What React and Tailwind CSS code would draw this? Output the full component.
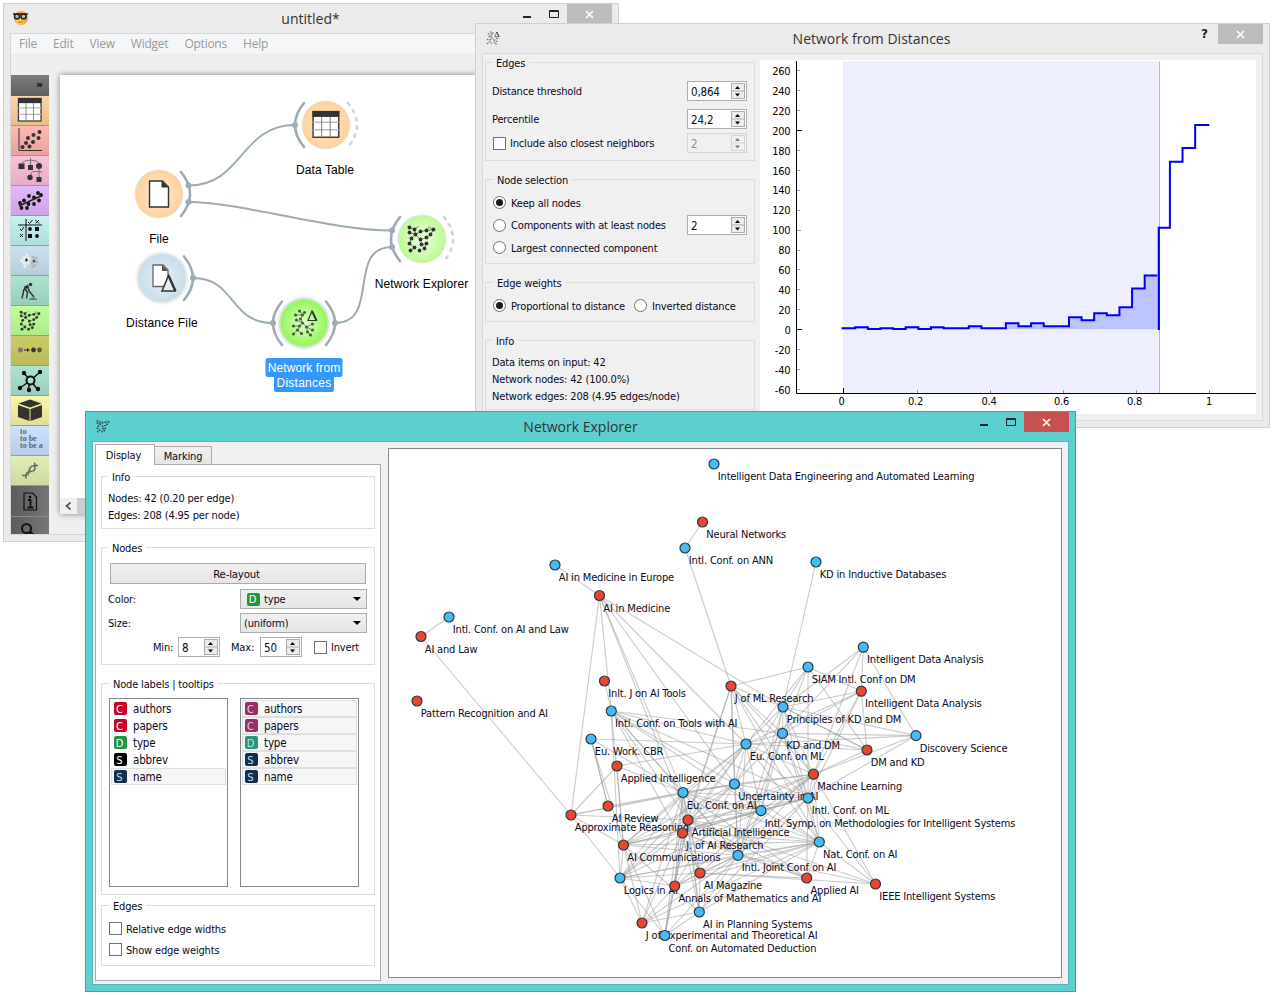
const UI = 'font-["DejaVu_Sans_Condensed","DejaVu_Sans",sans-serif] text-[11px] tracking-[-0.17px] leading-[13px] text-[#0a0a1c]';
const TITLE = 'font-["Open_Sans","Noto_Sans",sans-serif] text-[14px] leading-[18px] text-[#333333]';

/* ---------- small controls ---------- */

function Group({ title, className = '', children }) {
  return (
    <fieldset className={`min-w-0 border border-[#dcdcdc] ${className}`}>
      <legend className="h-[13px] px-[4px] leading-[15px] whitespace-nowrap">{title}</legend>
      {children}
    </fieldset>
  );
}

function Spin({ value, className = '', disabled }) {
  return (
    <div className={`flex h-5 shrink-0 items-center border pr-px pl-[3px] text-[11.5px] ${disabled ? 'border-[#d5d5d5] bg-[#f0f0f0] text-[#8b8b8b]' : 'border-[#abadb3] bg-white'} ${className}`}>
      <span className="flex-1 pt-[2px]">{value}</span>
      <svg className="h-4 w-[14px]" viewBox="0 0 14 16">
        <rect x=".5" y=".5" width="13" height="15" fill={disabled ? '#f0f0f0' : '#ececec'} stroke={disabled ? '#d5d5d5' : '#acacac'} />
        <path d="M0 8h14" stroke={disabled ? '#d5d5d5' : '#acacac'} />
        <path d="M4 6h5L6.500 3zM4 10.500h5L6.500 13.500z" fill={disabled ? '#777' : '#000'} />
      </svg>
    </div>
  );
}

const Check = () => <span className="h-[13px] w-[13px] shrink-0 border border-[#707070] bg-white" />;

function Radio({ on }) {
  return (
    <span className="flex h-[13px] w-[13px] shrink-0 items-center justify-center rounded-full border border-[#707070] bg-white">
      {on && <span className="h-[7px] w-[7px] rounded-full bg-[#1c1c1c]" />}
    </span>
  );
}

function Combo({ children }) {
  return (
    <div className="flex h-5 w-[127px] items-center border border-[#acacac] bg-linear-to-b from-[#f0f0f0] to-[#e6e6e6] pr-[5px] pl-[3px]">
      <span className="flex flex-1 items-center gap-[4px]">{children}</span>
      <svg className="h-4 w-[8px]" viewBox="0 0 8 4"><path d="M0 0h8L4 4z" /></svg>
    </div>
  );
}

function Tag({ letter, color }) {
  return <span className={`flex h-[13px] w-[13px] shrink-0 items-center justify-center rounded-[2px] pr-[2px] pt-px font-["DejaVu_Sans"] text-[10px] tracking-normal ${color}`}>{letter}</span>;
}

function Close({ className }) {
  return (
    <div className={`flex w-[45px] items-center justify-center ${className}`}>
      <svg className="h-[9px] w-[9px]" viewBox="0 0 9 9"><path d="M1 1l7 7M8 1l-7 7" stroke="#fff" strokeWidth="1.7" /></svg>
    </div>
  );
}

function MinMax({ className = '' }) {
  return (
    <svg className={`h-[10px] w-[38px] ${className}`} viewBox="0 0 38 10">
      <path d="M0 8h8" stroke="#222" strokeWidth="2" />
      <path d="M26.500 1.500h9v7h-9zM26 2.500h10" fill="none" stroke="#222" />
    </svg>
  );
}

/* ---------- glyph drawings ---------- */

const NET_DOTS = [[3, 3], [8, 5], [3, 8], [9, 10], [14, 7], [20, 6], [27, 5], [24, 10], [20, 13], [14, 15], [5, 14], [3, 19], [8, 23], [15, 20], [20, 19], [18, 24], [4, 26], [13, 26]];
function NetGlyph({ color = '#333' }) {
  return (
    <g>
      <path d="M1 2l7 3 1 5-6-2M9 10l5-3 6-1 7-1-3 5-4 3-6 2-5-5-4 4-2 5 5 4-4 3M14 15l1 5 5-1-2 5M8 5l4-3M20 6l3-4M23 3l4 2" fill="none" stroke={color} strokeWidth=".6" />
      {NET_DOTS.map(([x, y]) => <circle key={`${x}-${y}`} cx={x} cy={y} r="1.900" fill={color} />)}
    </g>
  );
}

const DIST_DOTS = [[9, 2], [5, 6], [12, 6], [14, 3.5], [6, 11], [10, 10], [12, 14], [3, 17], [9, 17], [16, 18], [22, 15], [22, 21], [7, 21], [17, 23], [3, 25], [11, 24.5], [20, 26]];
function DistGlyph({ color = '#4c5c46' }) {
  return (
    <g>
      <path d="M9 2l3 4-2 4 2 4 4 4 6-3M5 6l7 0M12 14l-3 3H3M9 17l-2 4-4 4M7 21l4 3.500M16 18l1 5 3 3M16 18l6 3M6 11l6 3" fill="none" stroke={color} strokeWidth=".7" />
      {DIST_DOTS.map(([x, y]) => <circle key={`${x}-${y}`} cx={x} cy={y} r="1.600" fill={color} />)}
      <path d="M17.500 11.500h8.500L21.500 2z" fill="none" stroke="#333" strokeWidth="1.200" />
      <path d="M21.500 2l4.500 9.500" stroke="#333" strokeWidth="1.800" />
    </g>
  );
}

function TableGlyph() {
  return (
    <g>
      <rect x="1" y="1" width="24" height="24" fill="#fff" stroke="#333" strokeWidth="1.300" />
      <path d="M1 11h24M1 18h24" stroke="#bbb" strokeWidth="1.300" />
      <path d="M9 6v19M17 6v19" stroke="#777" strokeWidth=".9" />
      <path d="M.5 .5h25v5.500h-25z" fill="#333" />
    </g>
  );
}

const dots = (pts, r = 2) => pts.map(([x, y]) => <circle key={`${x}-${y}`} cx={x} cy={y} r={r} />);

const TOOLS = [
  ['from-[#ffd5a0] to-[#eabf8b]', <g transform="translate(6.5 1.5) scale(.94)"><TableGlyph /></g>],
  ['from-[#ffb8b2] to-[#e9a29d]', <g fill="#333"><path d="M8 2v22.500H31" fill="none" stroke="#333" />{dots([[11.5, 21], [15, 17], [18.5, 20.5], [17, 12], [22, 16], [22.5, 9], [27.5, 12], [28.5, 6]])}</g>],
  ['from-[#fac1da] to-[#e5aec6]', <g fill="#333"><path d="M19.500 2v7M11 8c0-5 17-5 17 0v14M20 20c0-5 1-5 11-4" fill="none" stroke="#777" /><path d="M7.500 7.500h6v5.500h-6zM17 9h5v5h-5zM25.500 21h5v5h-5z" />{dots([[28, 10]], 3)}{dots([[19, 21.5]], 2.7)}</g>],
  ['from-[#e2b9fb] to-[#cda5e6]', <g fill="#111">{dots([[9, 17], [10.5, 22], [13, 14.5], [16, 22], [17.5, 18], [18, 10], [23, 18], [23, 11.5], [27, 7], [28, 14.5], [30, 9]], 1.9)}<path d="M8 20L31 9.500" stroke="#222" strokeWidth="1.500" /></g>],
  ['from-[#c3f4f2] to-[#aedfdd]', <g fill="#111"><path d="M15 3v22M7 9h24" stroke="#111" /><path d="M17 6l1.500 1.500L21.500 4M9 13l1.500 1.500L13 11M24.500 4l3.500 3.500M28 4l-3.500 3.500M9 18l3 3M12 18l-3 3" fill="none" stroke="#111" /><path d="M24 11h4v4h-4zM17 18h4v4h-4z" />{dots([[19, 13], [26, 20]], 1.9)}</g>],
  ['from-[#cae1ee] to-[#b7cddb]', <g fill="#eee">{dots([[13, 12], [16, 10], [18, 13], [17, 17], [13, 17], [14, 20], [11, 15]], 1.7)}<g fill="#b4b4b4">{dots([[22, 11], [25, 12], [26, 16], [24, 19], [21, 17], [22, 20]], 1.5)}</g><path d="M15.500 12.500v3M14 14h3M23 13.500v3M21.500 15h3" stroke="#222" /></g>],
  ['from-[#ade3cf] to-[#98cfbb]', <g fill="none" stroke="#333"><circle cx="19.500" cy="8.500" r="1.800" fill="#333" stroke="none" /><path d="M17.500 10l-4 2" strokeWidth="3" /><path d="M13.500 12l3 4.500-1 6M13 13l-1 5-1 4.500M17 11l1 4 5 6" strokeWidth="1.500" /><path d="M18 23.500c2-1 3-3 8 0z" fill="#777" stroke="#777" /></g>],
  ['from-[#c0ff97] to-[#afea89]', <g transform="translate(8 4) scale(.74)"><NetGlyph /></g>],
  ['from-[#cccc66] to-[#baba59]', <g fill="#333"><circle cx="9.500" cy="14" r="2.500" fill="#777" /><path d="M13 14h5" stroke="#222" /><path d="M16 12l3 2-3 2z" />{dots([[22.5, 14]], 2.4)}<circle cx="28.500" cy="14" r="2.400" fill="#555" /></g>],
  ['from-[#ade3cf] to-[#98cfbb]', <g fill="#111"><path d="M19.500 14.500L12 6M19.500 14.500L29 6M19.500 14.500L9 22M19.500 14.500L17 24M19.500 14.500L27 24" stroke="#111" strokeWidth="1.500" /><circle cx="19.500" cy="14.500" r="4" fill="#ade3cf" stroke="#111" strokeWidth="2" />{dots([[13, 7], [29, 6], [9, 22], [18, 24], [27, 23]], 2.2)}</g>],
  ['from-[#f9f6a7] to-[#e2df94]', <g fill="#333"><path d="M7.500 7.500L19 3.500 30.500 7.500 19 11.500z" /><path d="M7 9l11.500 4V25L7 21zM31 9l-11.500 4V25l11.500-4z" /></g>],
  ['from-[#cce2ff] to-[#b7cce8]', null],
  ['from-[#e0efb3] to-[#ccda9f]', <g fill="none" stroke="#666"><path d="M11 19.500c5 .5 7-1 7-4.500 0-4 3-6 9-5.500" strokeWidth="1.500" /><path d="M15 22.500c-1-5 1-7 5-7s5-3 3.500-9" strokeWidth="1.500" /><path d="M16 18l2 2M18.500 12.500l4 4M21 9.500l3 3" stroke="#999" /></g>],
];

/* ---------- workflow window ---------- */

function Sidebar() {
  return (
    <div className="flex h-[459px] w-[38px] flex-col overflow-hidden">
      <div className="flex h-[21px] shrink-0 items-center justify-end bg-linear-to-b from-[#7d7d7d] to-[#5f5f5f] pr-[6px] font-['DejaVu_Sans'] text-[11px] font-bold text-black">»</div>
      {TOOLS.map(([tone, glyph], i) => (
        <div key={i} className={`h-[30px] shrink-0 border-b border-[#999] bg-linear-to-b ${tone}`}>
          {glyph ? (
            <svg className="h-[29px] w-[38px]" viewBox="0 0 38 29">{glyph}</svg>
          ) : (
            <div className="pt-[3px] pl-[9px] font-['Liberation_Serif'] text-[8px] leading-[6.8px] font-bold text-[#666]">
              <div>to</div><div>to be</div><div>to be a</div>
            </div>
          )}
        </div>
      ))}
      <div className="h-[31px] shrink-0 border-b border-[#8a8a8a] bg-linear-to-r from-[#5c5c5c] to-[#777]">
        <svg className="h-[30px] w-[38px]" viewBox="0 0 38 30">
          <path d="M13 7h8.500l4 4v13H13z" fill="none" stroke="#111" strokeWidth="1.200" />
          <path d="M17 14h2.500v7M16.500 21.500h6" fill="none" stroke="#111" strokeWidth="1.800" /><circle cx="19" cy="11" r="1.300" />
        </svg>
      </div>
      <div className="h-[18px] shrink-0 bg-linear-to-r from-[#5c5c5c] to-[#777]">
        <svg className="h-[18px] w-[38px]" viewBox="0 0 38 18"><circle cx="15.500" cy="11.500" r="4.500" fill="none" stroke="#111" strokeWidth="2" /><path d="M19 15l4 4" stroke="#111" strokeWidth="3" /></svg>
      </div>
    </div>
  );
}

function Workflow() {
  const arc = { fill: 'none', stroke: '#9cacb4', strokeWidth: 2.6, strokeLinecap: 'round' };
  const dash = { fill: 'none', stroke: '#ccd6d9', strokeWidth: 2.6, strokeLinecap: 'round', strokeDasharray: '2.5 6' };
  const name = { textAnchor: 'middle', fontSize: 12, fontFamily: '"Liberation Sans", Arial, sans-serif', letterSpacing: '0.1' };
  return (
    <svg className="block h-[423px] w-[416px]" viewBox="60 75 416 423">
      <defs>
        <radialGradient id="orange"><stop offset="0" stopColor="#ffe9d2" /><stop offset="1" stopColor="#ffd19b" /></radialGradient>
        <radialGradient id="blue"><stop offset="0" stopColor="#e6eef4" /><stop offset="1" stopColor="#c8deeb" /></radialGradient>
        <radialGradient id="green"><stop offset="0" stopColor="#ecffe0" /><stop offset="1" stopColor="#bdf993" /></radialGradient>
        <radialGradient id="vivid"><stop offset="0" stopColor="#dcffc8" /><stop offset="1" stopColor="#93f755" /></radialGradient>
        <filter id="glow" x="-30%" y="-30%" width="160%" height="160%"><feGaussianBlur stdDeviation="1.6" /></filter>
      </defs>
      <g fill="none" stroke="#9cacb4" strokeWidth="2">
        <path d="M188.500 185.500C243 185.500 240 125 295 125" />
        <path d="M188.500 202C240 202 330 230.500 392 230.500" />
        <path d="M193 278C236 278 229 323 273 323" />
        <path d="M335 323C381 323 346 247 392 247" />
      </g>
      <g fill="#9cacb4">{dots([[188.5, 185.5], [188.5, 202], [193, 278], [273, 323], [335, 323], [295, 125], [392, 230.5], [392, 247]], 3)}</g>
      <path d="M181 172Q199 194 181 216M184 256.500Q202 278.500 184 300M304 103Q286 125 304 147M282 301.500Q264 323 282 345M326 301.500Q344 323 326 345M400 217Q382 239 400 261" {...arc} />
      <path d="M348 103Q366 125 348 147M444 217Q462 239 444 261" {...dash} />
      <circle cx="162" cy="278" r="25" fill="#9aa7b0" opacity=".45" filter="url(#glow)" />
      <circle cx="304" cy="323" r="25" fill="#7790b0" opacity=".5" filter="url(#glow)" />
      <g stroke="#dde3e0" strokeWidth=".8">
        <circle cx="159" cy="194" r="24" fill="url(#orange)" />
        <circle cx="326" cy="125" r="24" fill="url(#orange)" />
        <circle cx="162" cy="278" r="24" fill="url(#blue)" />
        <circle cx="422" cy="239" r="24" fill="url(#green)" />
        <circle cx="304" cy="323" r="24" fill="url(#vivid)" />
      </g>
      <path d="M149.500 181h13l6 6v20h-19z" fill="#fff" stroke="#333" strokeWidth="1.400" />
      <path d="M161.500 181v6.500h7z" fill="#333" />
      <path d="M153 265h10l5 5v16.500h-15z" fill="#fff" stroke="#666" strokeWidth="1.300" /><path d="M162 265v6h6z" fill="#555" />
      <path d="M162 291h13l-6.500-15.500z" fill="#e4ecf2" stroke="#333" strokeWidth="1.500" /><path d="M168.500 275.500L175.500 291" stroke="#333" strokeWidth="2.300" />
      <g transform="translate(312 110.500) scale(1.07)"><TableGlyph /></g>
      <g transform="translate(406.500 224.500)"><NetGlyph /></g>
      <g transform="translate(290.500 309)"><DistGlyph /></g>
      <rect x="265.500" y="358" width="77" height="19" rx="2.500" fill="#3399ff" />
      <rect x="274" y="374" width="60" height="18" rx="2.500" fill="#3399ff" />
      <g {...name}>
        <text x="325" y="174">Data Table</text>
        <text x="159" y="243">File</text>
        <text x="162" y="327" letterSpacing=".2">Distance File</text>
        <text x="421.500" y="288">Network Explorer</text>
        <text x="304" y="372" fill="#fff">Network from</text>
        <text x="304" y="387" fill="#fff" letterSpacing=".25">Distances</text>
      </g>
    </svg>
  );
}

function MainWindow() {
  return (
    <section className="absolute top-[3px] left-[3px] flex h-[539px] w-[616px] flex-col border border-[#d0d0d0] bg-[#ebebeb]">
      <header className="flex h-[29px] items-start">
        <svg className="mt-[6px] ml-[8px] h-[16px] w-[18px]" viewBox="0 0 18 16">
          <circle cx="9" cy="8" r="7" fill="#f7a531" /><circle cx="8" cy="10" r="4.500" fill="#ffd24a" />
          <path d="M1 4h15" stroke="#222" strokeWidth="1.500" /><g fill="#9ec3cc" stroke="#222" strokeWidth="1.500"><circle cx="5" cy="6.500" r="2.500" /><circle cx="11.500" cy="6.500" r="2.500" /></g>
          <path d="M6 12q3 1 5-1" fill="none" stroke="#a60" />
        </svg>
        <div className={`mt-[6px] flex-1 pl-[60px] text-center ${TITLE}`}>untitled*</div>
        <MinMax className="mt-[5px] mr-[6px] -ml-[8px]" />
        <Close className="mr-[6px] h-[20px] bg-[#bcbcbc]" />
      </header>
      <div className="mx-[6px] mb-[6px] flex flex-1 flex-col border border-[#d6d6d6] bg-[#efefef]">
        <nav className="flex h-[21px] items-center gap-[16.1px] border-b border-[#e9e9e9] bg-[#f5f6f8] pl-[8px] font-['Open_Sans'] text-[12px] tracking-[-0.25px] text-[#999]">
          {['File', 'Edit', 'View', 'Widget', 'Options', 'Help'].map((m) => <span key={m}>{m}</span>)}
        </nav>
        <div className="flex flex-1 items-start gap-[11px] overflow-hidden pt-[20px]">
          <Sidebar />
          <div className="h-[439px] flex-1 bg-white shadow-[0_0_6px_rgba(0,0,0,.45)]">
            <Workflow />
            <div className="flex h-[16px] items-center bg-[#f0f0f0]">
              <svg className="h-[16px] w-[17px]" viewBox="0 0 17 16"><path d="M10.500 4.500L6.500 8l4 3.500" fill="none" stroke="#555" strokeWidth="1.700" /></svg>
              <div className="h-[16px] w-[300px] bg-[#cdcdcd]" />
            </div>
          </div>
        </div>
      </div>
    </section>
  );
}

/* ---------- distances window ---------- */

const BINS = [1, 2, 0.4, 1, 0.4, 2, 0.4, 2, 1, 1, 3, 1, 1, 6, 3, 6, 3, 3, 12, 9, 16, 14, 22, 41, 54, 102, 168, 182, 205];

function Histogram() {
  const px = (v) => 843.3 + v * 366;
  const py = (v) => 329.3 - v * 0.9968;
  // bars end slightly left of the nominal bin edge
  const bin = (i) => 842.6 + i * 12.62 - (i > 12 ? 0.8 : 0) + (i === 29 ? 1.5 : 0);
  const steps = (list, from = 0) => list.map((v, i) => `L${bin(i + from)} ${py(v)}L${bin(i + from + 1)} ${py(v)}`).join('');
  const low = BINS.slice(0, 25);
  const ys = Array.from({ length: 17 }, (_, i) => -60 + i * 20);
  const xs = [['0', 841.5, 0], ['0.2', 915.5, 0.2], ['0.4', 989, 0.4], ['0.6', 1061.5, 0.6], ['0.8', 1134.5, 0.8], ['1', 1209, 1]];
  return (
    <svg className="block h-[354px] w-[496px] bg-white" viewBox="760 60 496 354">
      <rect x="843" y="61" width="316" height="332" fill="#eeeffe" />
      <path d={`M843.3 ${py(0)}${steps(low)}L${bin(25)} ${py(0)}Z`} fill="#bdc5ff" />
      <path d="M1159.500 61V393" stroke="#c9c268" />
      <path d={`M842.6 ${py(0)}${steps(low)}`} fill="none" stroke="#0000f5" strokeWidth="2" />
      <path d={`M1158.8 ${py(102)}${steps(BINS.slice(25), 25).replace(/^L[\d.]+ [\d.]+/, '')}`} fill="none" stroke="#0000f5" strokeWidth="2" />
      <path d="M1158.800 330V226.700" stroke="#0000f5" strokeWidth="2.200" />
      <path d="M796.500 61V393.500H1256" fill="none" stroke="#000" />
      {ys.map((v) => (
        <path key={v} d={`M797 ${Math.round(py(v)) + 0.5}h${v % 200 === 0 ? 5 : v === 100 ? 4 : 3}`} stroke={v % 200 === 0 ? '#000' : '#999'} />
      ))}
      {xs.map(([t, , v]) => <path key={t} d={`M${Math.round(px(v)) + 0.5} 393v${v ? -3 : -5}`} stroke={v ? '#999' : '#000'} />)}
      <g fontFamily='"DejaVu Sans Condensed", sans-serif' fontSize="11" letterSpacing="-.17">
        {ys.map((v) => <text key={v} x="790.500" y={py(v) + 4.7} textAnchor="end">{v}</text>)}
        {xs.map(([t, x]) => <text key={t} x={x} y="405" textAnchor="middle">{t}</text>)}
      </g>
    </svg>
  );
}

function DistancesWindow() {
  return (
    <section className="absolute top-[23px] left-[475px] flex h-[405px] w-[795px] flex-col border border-[#cfcfcf] bg-[#ebebeb]">
      <header className="flex h-[29px] items-start">
        <svg className="mt-[7px] ml-[10px] h-[14px] w-[14px]" viewBox="0 0 28 28"><DistGlyph color="#777" /></svg>
        <div className={`mt-[6px] flex-1 pl-[42px] text-center ${TITLE}`}>Network from Distances</div>
        <span className="mt-[1px] mr-[10px] font-['DejaVu_Sans'] text-[12px] leading-[18px] font-bold text-[#222]">?</span>
        <Close className="mr-[6px] h-[20px] bg-[#bcbcbc]" />
      </header>
      <div className={`mx-[6px] mb-[6px] flex flex-1 border border-[#d9d9d9] bg-[#f0f0f0] pl-[2px] ${UI}`}>
        <div className="flex w-[270px] flex-col gap-[12px] pt-[2px]">
          <Group title="Edges" className="h-[105px] pr-[7px] pl-[6px]">
            <div className="mt-[12px] flex items-center justify-between"><span>Distance threshold</span><Spin value="0,864" className="w-[60px]" /></div>
            <div className="mt-[8px] flex items-center justify-between"><span>Percentile</span><Spin value="24,2" className="w-[60px]" /></div>
            <div className="mt-[4px] flex items-center gap-[4px] pl-px"><Check /><span className="flex-1">Include also closest neighbors</span><Spin value="2" disabled className="w-[60px]" /></div>
          </Group>
          <Group title="Node selection" className="h-[91px] pr-[7px] pl-[7px]">
            <div className="mt-[10px] flex h-[13px] items-center gap-[5px]"><Radio on /><span className="pt-px">Keep all nodes</span></div>
            <div className="mt-[6px] flex items-center gap-[5px]"><Radio /><span className="flex-1">Components with at least nodes</span><Spin value="2" className="w-[60px]" /></div>
            <div className="mt-[6px] flex h-[13px] items-center gap-[5px]"><Radio /><span className="pt-px">Largest connected component</span></div>
          </Group>
          <Group title="Edge weights" className="h-[46px] pl-[7px]">
            <div className="mt-[10px] flex h-[13px] items-center gap-[5px]"><Radio on /><span className="w-[118px] pt-px whitespace-nowrap">Proportional to distance</span><Radio /><span className="pt-px">Inverted distance</span></div>
          </Group>
          <Group title="Info" className="h-[76px] pl-[6px]">
            <div className="mt-[7px] leading-[17px]"><div>Data items on input: 42</div><div>Network nodes: 42 (100.0%)</div><div>Network edges: 208 (4.95 edges/node)</div></div>
          </Group>
        </div>
        <div className="mt-[6px] ml-[5px]"><Histogram /></div>
      </div>
    </section>
  );
}

/* ---------- explorer window ---------- */

const CONF = '#44bbf9';
const JOUR = '#ee452f';
const NODES = {
  IDE: [714, 464, CONF, 'Intelligent Data Engineering and Automated Learning'],
  NN: [702.5, 522, JOUR, 'Neural Networks'],
  ANN: [685, 548, CONF, 'Intl. Conf. on ANN'],
  AIME: [555, 565, CONF, 'AI in Medicine in Europe'],
  AIM: [599.5, 595.5, JOUR, 'AI in Medicine'],
  KDID: [816, 562, CONF, 'KD in Inductive Databases'],
  ICAIL: [449, 617, CONF, 'Intl. Conf. on AI and Law'],
  LAW: [421, 636.5, JOUR, 'AI and Law'],
  PR: [417, 701, JOUR, 'Pattern Recognition and AI'],
  IDAC: [863.3, 647.2, CONF, 'Intelligent Data Analysis'],
  SIAM: [808, 667, CONF, 'SIAM Intl. Conf on DM'],
  IDAJ: [861.3, 691.2, JOUR, 'Intelligent Data Analysis'],
  DS: [916, 735.6, CONF, 'Discovery Science'],
  DMKD: [867, 750, JOUR, 'DM and KD'],
  TOOLS: [604.5, 681, JOUR, 'Inlt. J on AI Tools'],
  TAI: [611.3, 711, CONF, 'Intl. Conf. on Tools with AI'],
  JMLR: [731, 686, JOUR, 'J of ML Research'],
  PKDD: [783, 707, CONF, 'Principles of KD and DM'],
  KDD: [782.5, 733.4, CONF, 'KD and DM'],
  ECML: [746, 744, CONF, 'Eu. Conf. on ML'],
  CBR: [591, 739, CONF, 'Eu. Work. CBR'],
  APIN: [617, 766, JOUR, 'Applied Intelligence'],
  REV: [608, 806, JOUR, 'AI Review'],
  APR: [571, 815, JOUR, 'Approximate Reasoning'],
  ECAI: [683, 792.5, CONF, 'Eu. Conf. on AI'],
  UAI: [734.5, 784, CONF, 'Uncertainty in AI'],
  ISMIS: [761, 810.6, CONF, 'Intl. Symp. on Methodologies for Intelligent Systems'],
  ICML: [808, 798, CONF, 'Intl. Conf. on ML'],
  ML: [813.5, 774.2, JOUR, 'Machine Learning'],
  AIJ: [688, 820, JOUR, 'Artificial Intelligence'],
  JAIR: [682.5, 833, JOUR, 'J. of AI Research'],
  COMM: [623.5, 845, JOUR, 'AI Communications'],
  IJCAI: [738, 855.3, CONF, 'Intl. Joint Conf on AI'],
  NCAI: [819.3, 842, CONF, 'Nat. Conf. on AI'],
  LOGIC: [620, 878, CONF, 'Logics in AI'],
  MAG: [700, 873, JOUR, 'AI Magazine'],
  MATH: [674.7, 886, JOUR, 'Annals of Mathematics and AI'],
  APAI: [806.7, 878, JOUR, 'Applied AI'],
  IEEE: [875.5, 884, JOUR, 'IEEE Intelligent Systems'],
  PLAN: [699.3, 912, CONF, 'AI in Planning Systems'],
  JETAI: [642, 923, JOUR, 'J of Experimental and Theoretical AI'],
  CADE: [664.8, 935.5, CONF, 'Conf. on Automated Deduction'],
};

const LINKS = {
  NN: 'ANN', ANN: 'JMLR', LAW: 'ICAIL APR', AIM: 'AIME APR TAI ECAI AIJ UAI ECML PKDD',
  KDID: 'PKDD', SIAM: 'JMLR PKDD KDD ECML ICML IDAJ DMKD',
  IDAC: 'PKDD KDD IDAJ DS ML', IDAJ: 'PKDD KDD ECML DMKD ML ICML',
  DS: 'PKDD KDD ECML ML ICML', DMKD: 'PKDD KDD ECML ML',
  JMLR: 'PKDD KDD ECML ML ICML UAI JAIR AIJ IJCAI NCAI', PKDD: 'KDD ECML ML ICML UAI ISMIS IJCAI DMKD',
  KDD: 'ECML ML ICML UAI TAI ISMIS IJCAI NCAI', ECML: 'ML ICML CBR TAI APIN ECAI UAI AIJ JAIR ISMIS IJCAI NCAI COMM LOGIC',
  CBR: 'REV COMM ECAI', TOOLS: 'TAI', TAI: 'COMM ECAI AIJ ISMIS IJCAI ICML UAI MAG LOGIC',
  APIN: 'APR COMM ECAI', REV: 'ECAI CBR', APR: 'UAI ECAI AIJ COMM LOGIC',
  ECAI: 'UAI ML ICML AIJ JAIR COMM LOGIC MATH PLAN IJCAI NCAI MAG ISMIS JETAI CADE APAI',
  UAI: 'ML ICML AIJ JAIR IJCAI NCAI ISMIS MATH COMM',
  ISMIS: 'ML ICML IJCAI NCAI AIJ JAIR COMM LOGIC',
  ML: 'ICML AIJ JAIR IJCAI NCAI MATH IEEE MAG', ICML: 'AIJ JAIR IJCAI NCAI APAI IEEE COMM PLAN',
  AIJ: 'IJCAI NCAI COMM LOGIC MATH MAG PLAN CADE JETAI IEEE APAI',
  JAIR: 'IJCAI NCAI COMM MATH MAG PLAN CADE LOGIC APAI',
  COMM: 'LOGIC IJCAI NCAI JETAI PLAN CADE', IJCAI: 'NCAI LOGIC MAG MATH PLAN CADE JETAI APAI IEEE',
  NCAI: 'MAG MATH PLAN LOGIC APAI IEEE JETAI', LOGIC: 'MATH JETAI CADE MAG',
  MAG: 'APAI IEEE PLAN MATH', MATH: 'JETAI CADE', PLAN: 'JETAI CADE',
};

function Graph() {
  const nodes = Object.entries(NODES);
  return (
    <svg className="block h-full w-full" viewBox="389 449 672 528">
      <g stroke="#a0a0a3" strokeOpacity=".55" strokeWidth="1.100">
        {Object.entries(LINKS).flatMap(([a, list]) => list.split(' ').map((b) => (
          <line key={a + b} x1={NODES[a][0]} y1={NODES[a][1]} x2={NODES[b][0]} y2={NODES[b][1]} />
        )))}
      </g>
      <g fontFamily='"DejaVu Sans Condensed", sans-serif' fontSize="11" letterSpacing="-.17" fill="#0a0a1c">
        {nodes.map(([k, [x, y, , label]]) => <text key={k} x={x + 3.8} y={y + 16}>{label}</text>)}
      </g>
      <g stroke="#2b3a40" strokeWidth="1.200">
        {nodes.map(([k, [x, y, fill]]) => <circle key={k} cx={x} cy={y} r="5" fill={fill} />)}
      </g>
    </svg>
  );
}

const LABELS = [
  ['C', 'authors', 'bg-[#cb0026] text-white'], ['C', 'papers', 'bg-[#cb0026] text-white'], ['D', 'type', 'bg-[#1d963f] text-white'],
  ['S', 'abbrev', 'bg-black text-white'], ['S', 'name', 'bg-[#112e4c] text-[#b9dcf5]', true],
];
const TOOLTIPS = [
  ['C', 'authors', 'bg-[#9c2c63] text-[#b9dcf5]', true], ['C', 'papers', 'bg-[#9c2c63] text-[#b9dcf5]', true], ['D', 'type', 'bg-[#269677] text-[#b9dcf5]', true],
  ['S', 'abbrev', 'bg-[#112e4c] text-[#b9dcf5]', true], ['S', 'name', 'bg-[#112e4c] text-[#b9dcf5]', true],
];

function VarList({ items }) {
  return (
    <ul className="h-[189px] w-[119px] border border-[#828790] bg-white p-px">
      {items.map(([letter, name, color, on]) => (
        <li key={name} className={`flex h-[17px] items-center gap-[6px] border pl-[2px] text-[11.5px] ${on ? 'border-[#dedede] bg-[#f6f6f6]' : 'border-transparent'}`}>
          <Tag letter={letter} color={color} /><span className="pt-[2px]">{name}</span>
        </li>
      ))}
    </ul>
  );
}

function ExplorerWindow() {
  return (
    <section className="absolute top-[411px] left-[85px] flex h-[581px] w-[991px] flex-col border border-[#43a19f] bg-[#5dcfce]">
      <header className="flex h-[29px] items-start">
        <svg className="mt-[7px] ml-[10px] h-[14px] w-[14px]" viewBox="0 0 30 28"><NetGlyph color="#2c5557" /></svg>
        <div className={`mt-[6px] flex-1 pl-[71px] text-center ${TITLE} text-[#1f4a4a]`}>Network Explorer</div>
        <MinMax className="mt-[5px] mr-[6px]" />
        <Close className="mr-[6px] h-[20px] bg-[#c75050]" />
      </header>
      <div className={`mx-[6px] mb-[6px] flex flex-1 border border-[#54b5b3] bg-[#f0f0f0] pt-[2px] pr-[6px] pb-[3px] pl-[2px] ${UI}`}>
        <div className="flex w-[286px] flex-col">
          <div className="flex h-[20px] items-end">
            <div className="z-10 -mb-px flex h-[21px] w-[60px] items-center justify-center border border-b-0 border-[#acacac] bg-white pr-[3px] pt-px">Display</div>
            <div className="flex h-[18px] w-[57px] items-center justify-center border border-b-0 border-l-0 border-[#acacac] bg-linear-to-b from-[#f0f0f0] to-[#e5e5e5] pt-[2px]">Marking</div>
          </div>
          <div className="flex-1 border border-[#acacac] bg-white px-[5px] pt-[5px]">
            <Group title="Info" className="h-[59px] pl-[6px]">
              <div className="mt-[7px] leading-[17px]"><div>Nodes: 42 (0.20 per edge)</div><div>Edges: 208 (4.95 per node)</div></div>
            </Group>
            <Group title="Nodes" className="mt-[12px] h-[124px] pr-[7px] pl-[6px]">
              <div className="mt-[9px] mr-px ml-[2px] flex h-[21px] items-center justify-center border border-[#acacac] bg-linear-to-b from-[#f0f0f0] to-[#e5e5e5] pt-[2px] pr-[3px] text-[11.3px]">Re-layout</div>
              <div className="mt-[5px] flex items-center justify-between"><span>Color:</span><Combo><span className="ml-[3px]"><Tag letter="D" color="bg-[#1d963f] text-white" /></span>type</Combo></div>
              <div className="mt-[4px] flex items-center justify-between"><span>Size:</span><Combo>(uniform)</Combo></div>
              <div className="mt-[4px] flex items-center pl-[45px]">
                <span className="w-[25px]">Min:</span><Spin value="8" className="w-[42px]" />
                <span className="ml-[11px] w-[29px]">Max:</span><Spin value="50" className="w-[42px]" />
                <span className="mr-[4px] ml-[12px] flex"><Check /></span>Invert
              </div>
            </Group>
            <Group title="Node labels | tooltips" className="mt-[12px] h-[218px] pl-[7px]">
              <div className="mt-[8px] flex gap-[12px]"><VarList items={LABELS} /><VarList items={TOOLTIPS} /></div>
            </Group>
            <Group title="Edges" className="mt-[4px] h-[67px] pl-[7px]">
              <div className="mt-[10px] flex h-[13px] items-center gap-[4px]"><Check /><span className="pt-px">Relative edge widths</span></div>
              <div className="mt-[8px] flex h-[13px] items-center gap-[4px]"><Check /><span className="pt-px">Show edge weights</span></div>
            </Group>
          </div>
        </div>
        <div className="mt-[4px] ml-[7px] h-[530px] w-[674px] border border-[#828790] bg-white"><Graph /></div>
      </div>
    </section>
  );
}

export default function App() {
  return (
    <main className="relative h-[995px] w-[1273px] overflow-hidden bg-white">
      <MainWindow />
      <DistancesWindow />
      <ExplorerWindow />
    </main>
  );
}
